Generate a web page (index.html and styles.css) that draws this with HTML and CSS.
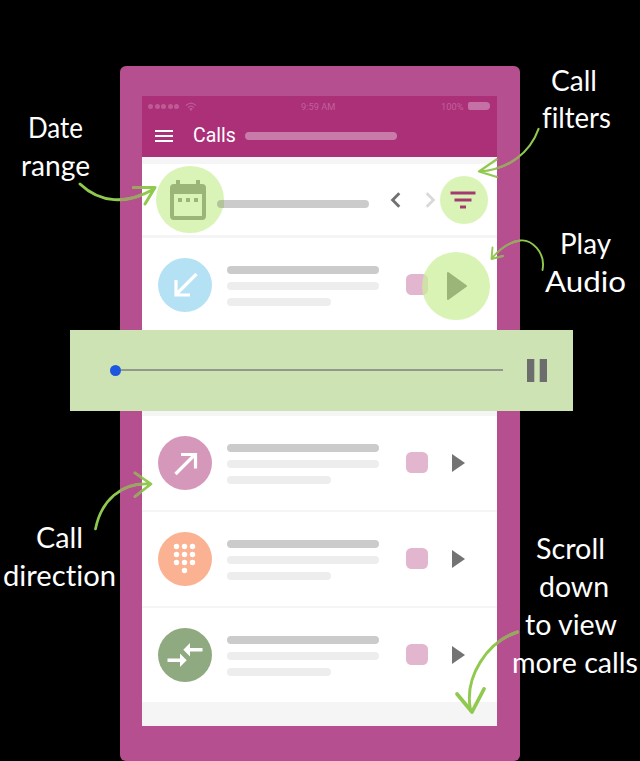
FILE: index.html
```html
<!DOCTYPE html>
<html lang="en">
<head>
<meta charset="utf-8">
<title>Calls</title>
<link rel="stylesheet" href="styles.css">
</head>
<body>
<main class="stage">
  <div class="phone">
    <div class="screen">
      <header class="header">
        <div class="status">
          <div class="signal"><i></i><i></i><i></i><i></i><i></i>
            <svg class="wifi" width="12" height="9" viewBox="0 0 12 9"><path d="M1 3.5Q6-1.2 11 3.5M3 5.6Q6 2.8 9 5.6" fill="none" stroke="currentColor" stroke-width="1.2"/><path d="M4.2 6.8Q6 5.4 7.8 6.8L6 9z" fill="currentColor"/></svg>
          </div>
          <span class="clock">9:59 AM</span>
          <div class="power"><span>100%</span><b class="battery"></b></div>
        </div>
        <div class="titlebar">
          <svg width="18" height="12" viewBox="0 0 18 12"><path d="M0 1h18M0 6h18M0 11h18" stroke="#fff" stroke-width="2"/></svg>
          <h1>Calls</h1>
          <span class="title-line"></span>
        </div>
      </header>

      <section class="toolbar">
        <div class="date-spot">
          <svg width="36" height="40" viewBox="0 0 36 40"><path fill="#9bb579" fill-rule="evenodd" d="M6 0h4v4h16V0h4v4h2q4 0 4 4v28q0 4-4 4H4q-4 0-4-4V8q0-4 4-4h2zM4 14v22h28V14zM8 18h4v4H8zM16 18h4v4h-4zM24 18h4v4h-4z"/></svg>
        </div>
        <span class="date-line"></span>
        <svg class="prev" width="11" height="16" viewBox="0 0 11 16"><path d="M9.3 1.2 2.6 8l6.7 6.8" fill="none" stroke="#707070" stroke-width="2.8"/></svg>
        <svg class="next" width="11" height="16" viewBox="0 0 11 16"><path d="M1.7 1.2 8.4 8l-6.7 6.8" fill="none" stroke="#d9d9d9" stroke-width="2.8"/></svg>
        <div class="filter-spot">
          <svg width="26" height="18" viewBox="0 0 26 18"><path d="M.5 2h25M4.500 9h17M10 16h6" stroke="#a33a70" stroke-width="3"/></svg>
        </div>
      </section>

      <section class="call">
        <div class="avatar blue"><svg width="54" height="54" viewBox="0 0 54 54"><path d="M38.500 16 18 36.500M18 22v15h14" fill="none" stroke="#fff" stroke-width="3.200"/></svg></div>
        <div class="lines"><i></i><i></i><i></i></div>
        <span class="tag"></span>
        <div class="play-spot"><svg width="21" height="28" viewBox="0 0 21 28"><path d="M1 1 19 14 1 27z" fill="#9bb579" stroke="#9bb579" stroke-width="2" stroke-linejoin="round"/></svg></div>
      </section>

      <section class="player">
        <span class="knob"></span><span class="track"></span>
        <svg width="20" height="23" viewBox="0 0 20 23"><path d="M0 0h7.300v23H0zM12.700 0H20v23h-7.300z" fill="#6d6d6d"/></svg>
      </section>

      <section class="call">
        <div class="avatar pink"><svg width="54" height="54" viewBox="0 0 54 54"><path d="M17.500 38 37 18.500M23 18.500h14.500v14" fill="none" stroke="#fff" stroke-width="3.200"/></svg></div>
        <div class="lines"><i></i><i></i><i></i></div>
        <span class="tag"></span>
        <svg class="play" width="13" height="18" viewBox="0 0 13 18"><path d="M0 0l13 9-13 9z" fill="#737373"/></svg>
      </section>
      <section class="call">
        <div class="avatar orange"><svg width="54" height="54" viewBox="0 0 54 54"><path d="M18.500 14.500h.01M26.500 14.500h.01M34.500 14.500h.01M18.500 22.500h.01M26.500 22.500h.01M34.500 22.500h.01M18.500 30.500h.01M26.500 30.500h.01M34.500 30.500h.01M26.500 38.500h.01" stroke="#fff" stroke-width="5.400" stroke-linecap="round"/></svg></div>
        <div class="lines"><i></i><i></i><i></i></div>
        <span class="tag"></span>
        <svg class="play" width="13" height="18" viewBox="0 0 13 18"><path d="M0 0l13 9-13 9z" fill="#737373"/></svg>
      </section>
      <section class="call">
        <div class="avatar green"><svg width="54" height="54" viewBox="0 0 54 54"><path d="M9.500 30.500H22V25.500L28.700 32.300 22 39V34H9.500zM44.500 20H32V15l-6.700 6.700L32 28.500V23.500h12.500z" fill="#fff"/></svg></div>
        <div class="lines"><i></i><i></i><i></i></div>
        <span class="tag"></span>
        <svg class="play" width="13" height="18" viewBox="0 0 13 18"><path d="M0 0l13 9-13 9z" fill="#737373"/></svg>
      </section>
    </div>
  </div>

  <svg class="notes" width="640" height="761" viewBox="0 0 640 761">
    <defs>
      <clipPath id="over-frame"><path d="M120 66h22v695h-22zM496.500 66H520v695h-23.500z"/></clipPath>
      <g id="arrows">
        <path d="M80 184C100 203 126 205 154 189M133.500 187.500 155 187.500 145 204" stroke-width="3"/>
        <path d="M538.500 129C530 153 508 170 479 171.500M496.500 159.500 479 171.500 497 177" stroke-width="2.200"/>
        <path d="M542.500 270C546 252 531 239 520 240.500 508 242 499 250 492 258M492.500 247.500 491.500 259 503 256" stroke-width="1.900"/>
        <path d="M95.500 529C101 501 121 482 150 484M135 473 151 484 135 496.500" stroke-width="2.700"/>
        <path d="M517.500 632C487 642 464 677 470.500 710" stroke-width="2.900"/>
        <path d="M457 694 472 712 484 689" stroke-width="3.700"/>
      </g>
    </defs>
    <use href="#arrows" class="arrows"/>
    <use href="#arrows" class="arrows muted" clip-path="url(#over-frame)"/>
    <g class="labels">
      <text x="28" y="138" textLength="55" lengthAdjust="spacingAndGlyphs">Date</text>
      <text x="21" y="176" textLength="69" lengthAdjust="spacingAndGlyphs">range</text>
      <text x="551" y="91" textLength="46" lengthAdjust="spacingAndGlyphs">Call</text>
      <text x="542" y="128" textLength="69" lengthAdjust="spacingAndGlyphs">filters</text>
      <text x="560" y="254" textLength="51" lengthAdjust="spacingAndGlyphs">Play</text>
      <text x="545" y="292" textLength="81" lengthAdjust="spacingAndGlyphs">Audio</text>
      <text x="36" y="548" textLength="47" lengthAdjust="spacingAndGlyphs">Call</text>
      <text x="3" y="586" textLength="113" lengthAdjust="spacingAndGlyphs">direction</text>
      <text x="536" y="559" textLength="69" lengthAdjust="spacingAndGlyphs">Scroll</text>
      <text x="539" y="597" textLength="70" lengthAdjust="spacingAndGlyphs">down</text>
      <text x="525" y="635" textLength="92" lengthAdjust="spacingAndGlyphs">to view</text>
      <text x="512" y="673" textLength="126" lengthAdjust="spacingAndGlyphs">more calls</text>
    </g>
  </svg>
</main>
</body>
</html>
```
FILE: styles.css
```css
* { box-sizing: border-box; }
body { margin: 0; background: #000; }
svg { display: block; flex: none; }
.stage { position: relative; width: 640px; height: 761px; padding: 66px 120px 0; overflow: hidden; }
.phone { height: 695px; padding: 30px 23.5px 35px 22px; border-radius: 6px; background: #b54f90; }
.screen { height: 630px; background: #f5f5f5; }

.header { height: 60.500px; background: #ab3078; color: #c870a4; font-family: Roboto, sans-serif; }
.status { display: flex; align-items: center; justify-content: space-between; height: 20px; padding: 0 6px; font-size: 9.300px; }
.signal { display: flex; align-items: center; gap: 1.500px; width: 54px; color: #be5b95; }
.signal i { width: 5px; height: 5px; border-radius: 50%; background: #be5b95; }
.wifi { margin-left: 4px; }
.clock { color: #c16198; }
.power { display: flex; align-items: center; justify-content: flex-end; gap: 5px; width: 56px; color: #c16198; }
.battery { width: 22px; height: 8px; border-radius: 2px 4px 4px 2px; background: #c472a5; }
.titlebar { display: flex; align-items: center; height: 40px; padding-left: 13px; }
.titlebar h1 { width: 52px; margin: 0 0 0 20px; color: #fff; font-size: 19.500px; font-weight: 400; line-height: 24px; }
.title-line { width: 152px; height: 8px; border-radius: 4px; background: #c87aa9; }

.toolbar { position: relative; display: flex; align-items: center; height: 71px; margin: 7.500px 0 3px; padding-left: 14px; background: #fff; }
.date-spot, .filter-spot, .play-spot { display: flex; align-items: center; justify-content: center; flex: none; border-radius: 50%; background: #daf4b7; }
.date-spot { z-index: 1; width: 67.500px; height: 67.500px; padding-right: 4px; }
.date-line { width: 152px; height: 8px; margin: 8px 0 0 -7px; border-radius: 4px; background: #cbcbcb; }
.date-line::before { content: ""; position: relative; z-index: 2; display: block; width: 7px; height: 8px; border-radius: 4px 0 0 4px; background: #b3c49b; }
.prev { margin-left: 21px; }
.next { margin-left: 24px; }
.filter-spot { width: 48px; height: 48px; margin-left: 4px; }
.filter-spot svg { margin-right: 2px; }

.call { display: flex; align-items: center; height: 94px; padding-left: 16px; background: #fff; }
.call + .call { margin-top: 2px; }
.avatar { width: 54px; height: 54px; border-radius: 50%; }
.blue { background: #b5e1f5; }
.pink { background: #d598bb; }
.orange { background: #fbb292; }
.green { background: #8faa80; }
.lines { display: flex; flex-direction: column; gap: 8px; width: 152px; margin: 2px 0 0 15px; }
.lines i { height: 8px; border-radius: 4px; background: #ededed; }
.lines i:first-child { background: #cbcbcb; }
.lines i:last-child { width: 104px; }
.tag { width: 21.500px; height: 21px; margin: -1px 0 0 27px; border-radius: 5.500px; background: #e2b6cf; }
.play { margin-left: 24px; }
.play-spot { width: 68px; height: 68px; margin: 2px 0 0 -6px; padding-left: 4px; background: rgba(203, 238, 152, .72); }

.player { position: relative; z-index: 1; display: flex; align-items: center; height: 80.500px; margin: -2px -76.500px 5.500px -72px; padding-left: 39.500px; background: #cee3b4; }
.knob { width: 11px; height: 11px; border-radius: 50%; background: #1d57df; }
.track { width: 382px; height: 2px; background: #91998a; }
.player svg { margin-left: 24.500px; }

.notes { position: absolute; inset: 0; z-index: 2; }
.arrows { fill: none; stroke: #90c94e; stroke-linecap: round; stroke-linejoin: round; }
.arrows.muted { stroke: #9ba462; }
.labels { fill: #fff; font: 400 28px Lato, sans-serif; font-variant-ligatures: none; }
```
